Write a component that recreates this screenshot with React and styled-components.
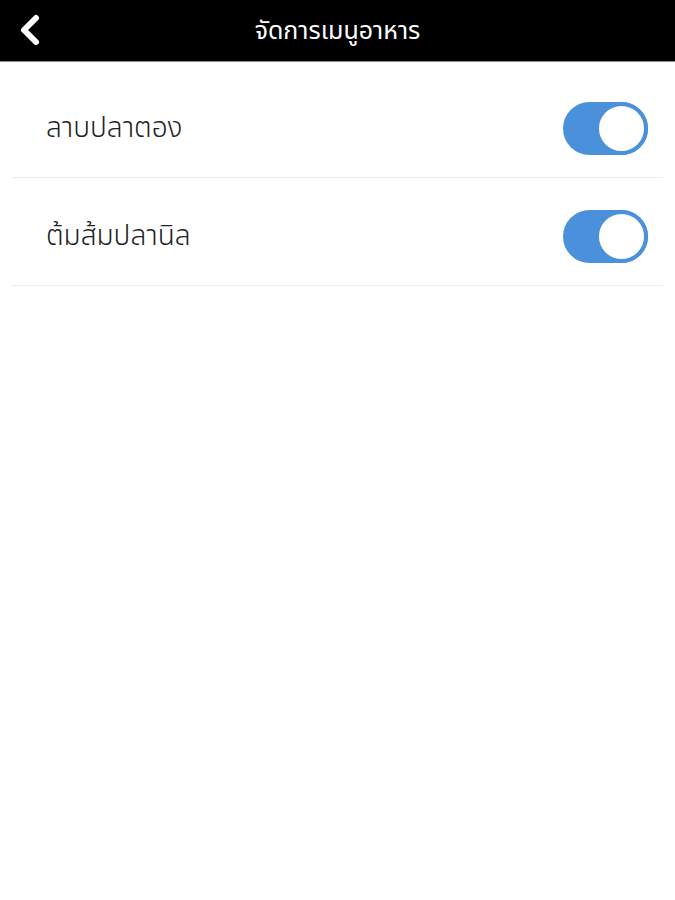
import React, { useState } from "react";
import styled, { createGlobalStyle } from "styled-components";

const GlobalStyle = createGlobalStyle`
  html, body {
    margin: 0;
    padding: 0;
    background: #fff;
  }
  body {
    font-family: "Noto Sans Thai", "Noto Sans", "DejaVu Sans", sans-serif;
  }
`;

const Page = styled.div`
  width: 675px;
  min-height: 900px;
  background: #fff;
`;

const Header = styled.header`
  position: relative;
  height: 61px;
  background: #000;
  border-bottom: 1px solid #8a8a8a;
  display: flex;
  align-items: center;
  justify-content: center;
`;

const BackButton = styled.button`
  position: absolute;
  left: 12px;
  top: 10px;
  width: 36px;
  height: 40px;
  padding: 0;
  border: 0;
  background: none;
  cursor: pointer;
  display: flex;
  align-items: center;
  justify-content: center;
`;

const Title = styled.h1`
  margin: 0;
  color: #fff;
  font-size: 25px;
  font-weight: 400;
`;

const List = styled.ul`
  list-style: none;
  margin: 0;
  padding: 8px 12px 0;
`;

const Row = styled.li`
  height: 108px;
  display: flex;
  align-items: center;
  justify-content: space-between;
  padding: 10px 15px 0 34px;
  border-bottom: 1px solid #ececec;
  box-sizing: border-box;
`;

const Name = styled.span`
  font-size: 28px;
  font-weight: 300;
  color: #222;
`;

const Switch = styled.button`
  width: 85px;
  height: 53px;
  padding: 0;
  border-radius: 27px;
  border: 0;
  background: ${(p) => (p.$on ? "#4a90db" : "#d8d8d8")};
  display: flex;
  align-items: center;
  justify-content: ${(p) => (p.$on ? "flex-end" : "flex-start")};
  cursor: pointer;
`;

const Knob = styled.span`
  width: 45px;
  height: 45px;
  border-radius: 50%;
  background: #fff;
  border: 4px solid #4a90db;
`;

const items = ["ลาบปลาตอง", "ต้มส้มปลานิล"];

export default function App() {
  const [on, setOn] = useState(items.map(() => true));
  return (
    <Page>
      <GlobalStyle />
      <Header>
        <BackButton aria-label="back">
          <svg width="24" height="34" viewBox="0 0 24 34">
            <path
              d="M18 5 L6 17 L18 29"
              fill="none"
              stroke="#fff"
              strokeWidth="6"
              strokeLinecap="round"
              strokeLinejoin="round"
            />
          </svg>
        </BackButton>
        <Title>จัดการเมนูอาหาร</Title>
      </Header>
      <List>
        {items.map((name, i) => (
          <Row key={name}>
            <Name>{name}</Name>
            <Switch
              $on={on[i]}
              onClick={() => setOn(on.map((v, j) => (j === i ? !v : v)))}
            >
              <Knob />
            </Switch>
          </Row>
        ))}
      </List>
    </Page>
  );
}
